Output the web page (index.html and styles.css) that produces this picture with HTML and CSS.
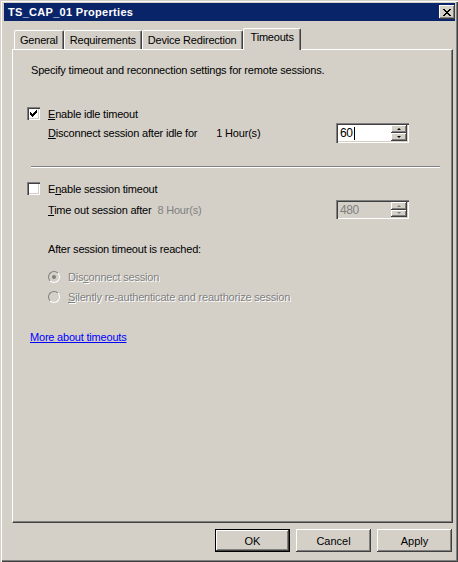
FILE: index.html
```html
<!DOCTYPE html>
<html lang="en">
<head>
    <meta charset="UTF-8">
    <title>TS_CAP_01 Properties</title>
    <link rel="stylesheet" href="styles.css">
</head>
<body>

    <div class="window">

        <div class="titlebar">
            <span class="title">TS_CAP_01 Properties</span>
            <span class="close-btn">
                <svg width="8" height="7" viewBox="0 0 8 7" shape-rendering="crispEdges">
                    <path d="M0 0h2v1h-2z M6 0h2v1h-2z M1 1h2v1h-2z M5 1h2v1h-2z M2 2h4v1h-4z M3 3h2v1h-2z M2 4h4v1h-4z M1 5h2v1h-2z M5 5h2v1h-2z M0 6h2v1h-2z M6 6h2v1h-2z" fill="#000"/>
                </svg>
            </span>
        </div>

        <div class="tabs">
            <div class="tab">General</div>
            <div class="tab">Requirements</div>
            <div class="tab">Device Redirection</div>
            <div class="tab active">Timeouts</div>
        </div>

        <div class="panel">
            <p class="intro">Specify timeout and reconnection settings for remote sessions.</p>

            <div class="check-row idle-row">
                <span class="checkbox">
                    <svg width="7" height="7" viewBox="0 0 7 7" shape-rendering="crispEdges">
                        <path d="M6 0h1v3h-1z M5 1h1v3h-1z M4 2h1v3h-1z M0 2h1v3h-1z M1 3h1v3h-1z M3 3h1v3h-1z M2 4h1v3h-1z" fill="#000"/>
                    </svg>
                </span>
                <span class="label"><u>E</u>nable idle timeout</span>
            </div>

            <div class="field-row idle-field">
                <span><u>D</u>isconnect session after idle for</span>
                <span class="unit wide">1 Hour(s)</span>
                <div class="spin">
                    <span class="spin-value">60<i class="caret"></i></span>
                    <span class="spin-btns">
                        <span class="spin-btn"><i class="arrow up"></i></span>
                        <span class="spin-btn"><i class="arrow down"></i></span>
                    </span>
                </div>
            </div>

            <div class="separator"></div>

            <div class="check-row session-row">
                <span class="checkbox"></span>
                <span class="label">E<u>n</u>able session timeout</span>
            </div>

            <div class="field-row session-field">
                <span><u>T</u>ime out session after</span>
                <span class="unit grey">8 Hour(s)</span>
                <div class="spin disabled">
                    <span class="spin-value">480</span>
                    <span class="spin-btns">
                        <span class="spin-btn"><i class="arrow up"></i></span>
                        <span class="spin-btn"><i class="arrow down"></i></span>
                    </span>
                </div>
            </div>

            <p class="after">After session timeout is reached:</p>

            <div class="radio-row first">
                <span class="radio checked"></span>
                <span class="disabled-text">Dis<u>c</u>onnect session</span>
            </div>
            <div class="radio-row">
                <span class="radio"></span>
                <span class="disabled-text"><u>S</u>ilently re-authenticate and reauthorize session</span>
            </div>

            <a class="more-link" href="#">More about timeouts</a>
        </div>

        <div class="buttons">
            <button class="btn default" type="button">OK</button>
            <button class="btn" type="button">Cancel</button>
            <button class="btn" type="button">Apply</button>
        </div>

    </div>

</body>
</html>
```

FILE: styles.css
```css
*{
    box-sizing: border-box;
}

body{
    margin: 0;
    font-family: "Liberation Sans", Arial, sans-serif;
    font-size: 11px;
    letter-spacing: -0.2px;
    color: #000;
    background: #d4d0c8;
}

.window{
    width: 458px;
    height: 562px;
    padding: 3px 3px 0 4px;
    background: #d4d0c8;
    box-shadow: inset 1px 1px #d4d0c8, inset 2px 2px #fff, inset -1px -1px #404040, inset -2px -2px #808080;
}

/* title bar */
.titlebar{
    height: 18px;
    background: #0a246a;
    color: #fff;
    display: flex;
    align-items: center;
    justify-content: space-between;
    padding: 0 0 0 4px;
}

.title{
    font-weight: bold;
    font-size: 11px;
    letter-spacing: 0.3px;
}

.close-btn{
    width: 16px;
    height: 14px;
    background: #d4d0c8;
    display: flex;
    align-items: center;
    justify-content: center;
    box-shadow: inset -1px -1px #404040, inset 1px 1px #fff, inset -2px -2px #808080;
}

/* tabs */
.tabs{
    display: flex;
    align-items: flex-end;
    height: 22px;
    margin: 7px 0 -1px 8px;
    padding-left: 2px;
    position: relative;
    z-index: 1;
}

.tab{
    height: 19px;
    margin-bottom: 1px;
    padding: 3px 5px 0 5px;
    border-top: 1px solid #fff;
    border-left: 1px solid #fff;
    border-right: 1px solid #404040;
    border-radius: 2px 2px 0 0;
    box-shadow: inset -1px 0 #808080;
    white-space: nowrap;
}

.tab.active{
    height: 22px;
    margin-bottom: 0;
    padding: 2px 6px 0 7px;
    background: #d4d0c8;
}

/* panel */
.panel{
    height: 474px;
    margin: 0 2px 0 8px;
    padding: 0 14px;
    border-top: 1px solid #fff;
    border-left: 1px solid #fff;
    border-right: 1px solid #404040;
    border-bottom: 1px solid #404040;
    box-shadow: inset -1px -1px #808080;
}

.intro{
    margin: 13px 0 0 4px;
    height: 14px;
    line-height: 14px;
}

.check-row{
    display: flex;
    align-items: center;
    height: 13px;
}

.idle-row{
    margin-top: 30px;
}

.session-row{
    margin-top: 14px;
}

.checkbox{
    width: 13px;
    height: 13px;
    background: #fff;
    display: flex;
    align-items: center;
    justify-content: center;
    box-shadow: inset 1px 1px #808080, inset 2px 2px #404040, inset -1px -1px #fff, inset -2px -2px #d4d0c8;
}

.label{
    margin-left: 8px;
}

.field-row{
    display: flex;
    align-items: center;
    margin: 0 29px 0 21px;
}

.idle-field{
    margin-top: 3px;
    height: 20px;
}

.session-field{
    margin-top: 5px;
    height: 19px;
}

.unit{
    margin-left: 6px;
}

.unit.wide{
    margin-left: 19px;
}

.grey{
    color: #808080;
}

/* spin box */
.spin{
    margin-left: auto;
    width: 73px;
    height: 100%;
    display: flex;
    padding: 2px;
    background: #fff;
    box-shadow: inset 1px 1px #808080, inset 2px 2px #404040, inset -1px -1px #fff, inset -2px -2px #d4d0c8;
}

.spin.disabled{
    background: #d4d0c8;
    color: #808080;
}

.spin-value{
    flex: 1;
    display: flex;
    align-items: center;
    padding-left: 2px;
    font-size: 12px;
    letter-spacing: -0.4px;
}

.caret{
    width: 1px;
    height: 13px;
    margin-left: 1px;
    background: #000;
}

.spin-btns{
    width: 16px;
    display: flex;
    flex-direction: column;
}

.spin-btn{
    flex: 1;
    display: flex;
    align-items: center;
    justify-content: center;
    background: #d4d0c8;
    box-shadow: inset -1px -1px #404040, inset 1px 1px #fff, inset -2px -2px #808080;
}

.arrow{
    width: 0;
    height: 0;
    border-left: 2px solid transparent;
    border-right: 2px solid transparent;
}

.arrow.up{
    border-bottom: 2px solid #000;
}

.arrow.down{
    border-top: 2px solid #000;
}

.spin.disabled .arrow.up{
    border-bottom-color: #808080;
}

.spin.disabled .arrow.down{
    border-top-color: #808080;
}

.separator{
    margin: 23px -2px 0 4px;
    height: 2px;
    border-top: 1px solid #808080;
    border-bottom: 1px solid #fff;
}

.after{
    margin: 23px 0 0 21px;
    height: 14px;
    line-height: 14px;
}

/* radios */
.radio-row{
    display: flex;
    align-items: center;
    height: 12px;
    margin: 8px 0 0 21px;
}

.radio-row.first{
    margin-top: 15px;
}

.radio{
    width: 12px;
    height: 12px;
    margin-right: 8px;
    border-radius: 50%;
    border: 1px solid;
    border-color: #808080 #fff #fff #808080;
    background: #d4d0c8;
    display: flex;
    align-items: center;
    justify-content: center;
}

.radio.checked::after{
    content: "";
    width: 4px;
    height: 4px;
    border-radius: 50%;
    background: #808080;
}

.disabled-text{
    color: #808080;
    text-shadow: 1px 1px #fff;
}

.more-link{
    display: block;
    margin: 27px 0 0 3px;
    height: 14px;
    line-height: 14px;
    color: #0000ff;
    width: fit-content;
}

/* bottom buttons */
.buttons{
    display: flex;
    justify-content: flex-end;
    gap: 6px;
    margin: 6px 3px 0 0;
}

.btn{
    width: 75px;
    height: 23px;
    padding: 0;
    border: none;
    background: #d4d0c8;
    font-family: "Liberation Sans", Arial, sans-serif;
    font-size: 11px;
    color: #000;
    box-shadow: inset -1px -1px #404040, inset 1px 1px #fff, inset -2px -2px #808080;
}

.btn.default{
    border: 1px solid #000;
}
```
